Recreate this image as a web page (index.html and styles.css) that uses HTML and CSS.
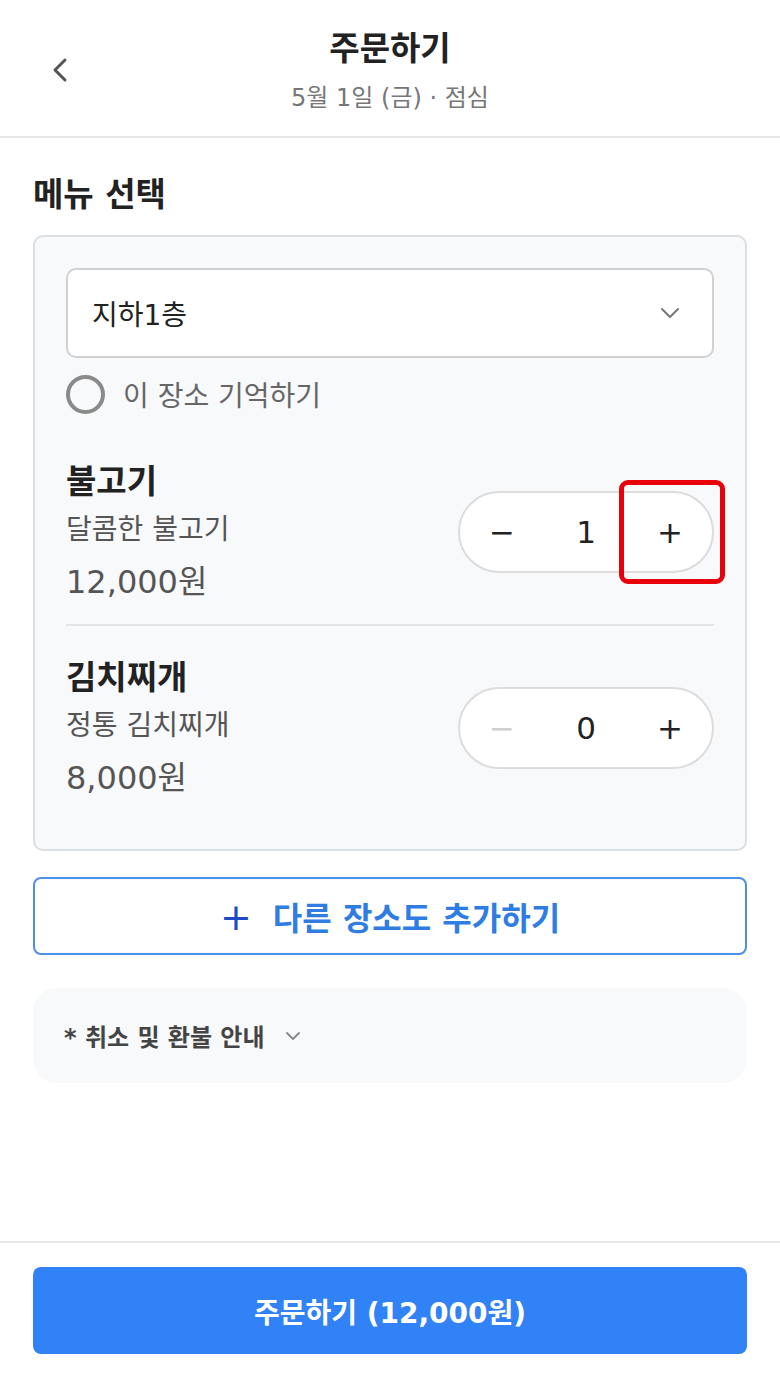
FILE: index.html
```html
<!DOCTYPE html>
<html lang="ko">
<head>
    <meta charset="UTF-8">
    <title>주문하기</title>
    <link rel="stylesheet" href="styles.css">
</head>
<body>
<div class="page">

    <header class="top">
        <button class="back" type="button" aria-label="뒤로">
            <svg width="20" height="26" viewBox="0 0 20 26"><path d="M15 3 L5 13 L15 23" fill="none" stroke="#555" stroke-width="3" stroke-linecap="round" stroke-linejoin="round"/></svg>
        </button>
        <div class="top-text">
            <h1 class="top-title">주문하기</h1>
            <p class="top-sub">5월 1일 (금) · 점심</p>
        </div>
        <div></div>
    </header>

    <main class="content">
        <h2 class="sec-title">메뉴 선택</h2>

        <section class="card">
            <div class="select">
                <span>지하1층</span>
                <svg width="20" height="12" viewBox="0 0 20 12"><path d="M2 2 L10 10 L18 2" fill="none" stroke="#777" stroke-width="2" stroke-linecap="round" stroke-linejoin="round"/></svg>
            </div>

            <label class="remember">
                <span class="radio"></span>
                <span>이 장소 기억하기</span>
            </label>

            <div class="item">
                <div class="item-info">
                    <div class="item-name">불고기</div>
                    <div class="item-desc">달콤한 불고기</div>
                    <div class="item-price">12,000원</div>
                </div>
                <div class="stepper">
                    <button class="step" type="button">−</button>
                    <span class="count">1</span>
                    <button class="step plus" type="button">+<span class="mark"></span></button>
                </div>
            </div>

            <div class="item">
                <div class="item-info">
                    <div class="item-name">김치찌개</div>
                    <div class="item-desc">정통 김치찌개</div>
                    <div class="item-price">8,000원</div>
                </div>
                <div class="stepper">
                    <button class="step off" type="button">−</button>
                    <span class="count">0</span>
                    <button class="step" type="button">+</button>
                </div>
            </div>
        </section>

        <button class="add-place" type="button"><span class="add-plus">+</span> 다른 장소도 추가하기</button>

        <div class="notice">
            <span>* 취소 및 환불 안내</span>
            <svg width="16" height="10" viewBox="0 0 16 10"><path d="M2 2 L8 8 L14 2" fill="none" stroke="#888" stroke-width="1.8" stroke-linecap="round" stroke-linejoin="round"/></svg>
        </div>
    </main>

    <footer class="bottom">
        <button class="order" type="button">주문하기 (12,000원)</button>
    </footer>

</div>
</body>
</html>
```

FILE: styles.css
```css
* {
    box-sizing: border-box;
}

body {
    margin: 0;
    background: #fff;
    color: #222;
    font-family: "DejaVu Sans", "Noto Sans CJK KR", sans-serif;
}

button {
    font-family: inherit;
    background: none;
    border: 0;
    padding: 0;
    cursor: pointer;
}

.page {
    min-height: 100vh;
    display: flex;
    flex-direction: column;
}

/* 상단 헤더 */
.top {
    display: grid;
    grid-template-columns: 120px 1fr 120px;
    align-items: center;
    padding: 26px 0 22px;
    border-bottom: 2px solid #e6e6e6;
}

.back {
    justify-self: start;
    margin-left: 50px;
    display: flex;
}

.top-text {
    text-align: center;
}

.top-title {
    margin: 0;
    font-size: 33px;
    line-height: 46px;
    font-weight: bold;
    color: #222;
}

.top-sub {
    margin: 10px 0 0;
    font-size: 24px;
    line-height: 32px;
    color: #777;
}

/* 본문 */
.content {
    padding: 0 33px;
}

.sec-title {
    margin: 37px 0 20px;
    font-size: 33px;
    line-height: 40px;
    font-weight: bold;
}

.card {
    border: 2px solid #dcdfe2;
    border-radius: 10px;
    background: #f8f9fb;
    padding: 31px 31px 29px;
}

.select {
    height: 90px;
    display: flex;
    align-items: center;
    justify-content: space-between;
    padding: 0 32px 0 24px;
    background: #fff;
    border: 2px solid #cfd1d3;
    border-radius: 10px;
    font-size: 28px;
}

.remember {
    display: flex;
    align-items: center;
    gap: 18px;
    margin: 16px 0;
    font-size: 28px;
    color: #666;
}

.radio {
    width: 39px;
    height: 39px;
    border: 4px solid #8a8a8a;
    border-radius: 50%;
}

.item {
    display: flex;
    align-items: center;
    justify-content: space-between;
    padding: 26px 0 16px;
    border-bottom: 2px solid #e3e5e7;
}

.item:last-child {
    border-bottom: 0;
}

.item-info {
    padding-top: 4px;
}

.item-name {
    font-size: 33px;
    line-height: 44px;
    font-weight: bold;
}

.item-desc {
    font-size: 28px;
    line-height: 52px;
    color: #555;
}

.item-price {
    font-size: 32px;
    line-height: 52px;
    color: #555;
}

/* 수량 버튼 */
.stepper {
    width: 256px;
    height: 82px;
    display: grid;
    grid-template-columns: 1fr 1fr 1fr;
    align-items: center;
    background: #fff;
    border: 2px solid #dcdcdc;
    border-radius: 41px;
}

.step,
.count {
    height: 100%;
    display: flex;
    align-items: center;
    justify-content: center;
    font-size: 31px;
    color: #222;
}

.step.off {
    color: #cfcfcf;
}

.plus {
    position: relative;
}

/* 강조 표시(빨간 박스) */
.mark {
    position: absolute;
    top: -13px;
    bottom: -13px;
    left: -9px;
    right: -13px;
    border: 5px solid #e8000b;
    border-radius: 9px;
}

.add-place {
    width: 100%;
    height: 78px;
    margin-top: 26px;
    border: 2px solid #4d8fe6;
    border-radius: 8px;
    background: #fff;
    font-size: 32px;
    font-weight: bold;
    color: #2f7de3;
}

.add-plus {
    color: #1f4cc4;
    font-weight: normal;
    font-size: 38px;
    margin-right: 10px;
}

.notice {
    display: flex;
    align-items: center;
    gap: 20px;
    margin-top: 33px;
    height: 95px;
    padding: 0 31px;
    border-radius: 24px;
    background: #f7f9fb;
    font-size: 24px;
    font-weight: bold;
    color: #444;
}

/* 하단 주문 버튼 */
.bottom {
    margin-top: auto;
    border-top: 2px solid #e8e8e8;
    padding: 24px 33px 32px;
}

.order {
    width: 100%;
    height: 87px;
    border-radius: 8px;
    background: #3182f6;
    color: #fff;
    font-size: 28px;
    font-weight: bold;
}
```
